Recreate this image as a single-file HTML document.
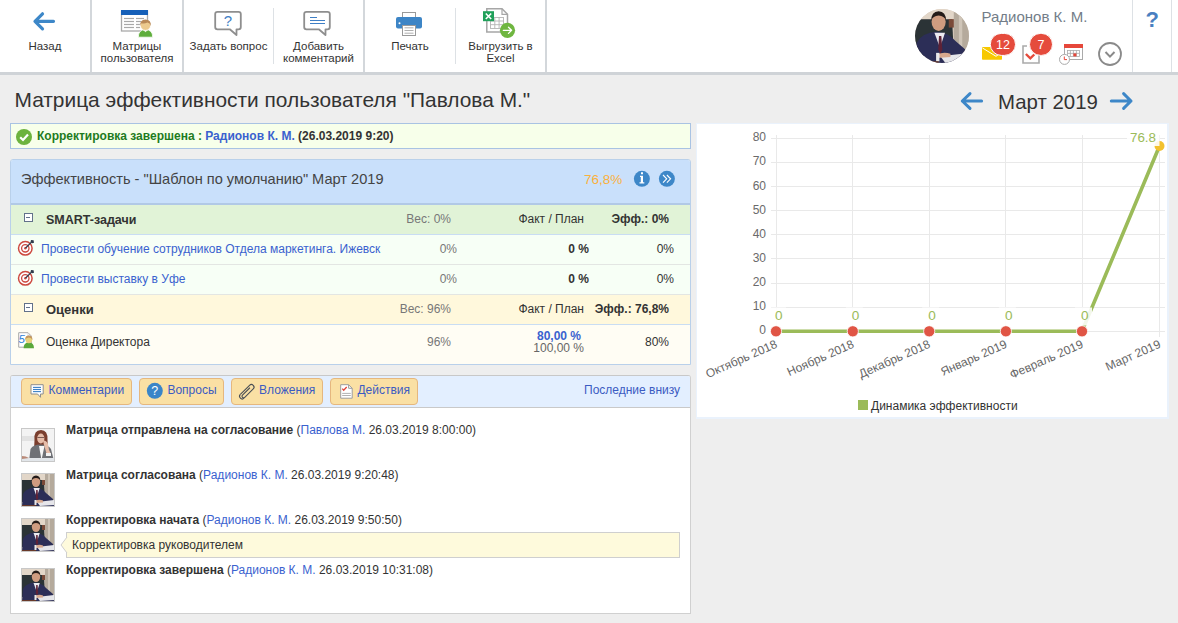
<!DOCTYPE html>
<html><head><meta charset="utf-8">
<style>
*{box-sizing:border-box;margin:0;padding:0}
html,body{width:1178px;height:623px;overflow:hidden;background:#eeeeee;font-family:"Liberation Sans",sans-serif;color:#333}
.a{position:absolute;white-space:nowrap}
#tb{position:absolute;left:0;top:0;width:1178px;height:72px;background:#fff;border-bottom:0}
#tbb{position:absolute;left:0;top:72px;width:1178px;height:3px;background:#cfd3d7}
.vs{position:absolute;top:0;width:2px;height:72px;background:#d3d7db}
.vt{position:absolute;top:8px;width:1px;height:56px;background:#dde1e5}
.tl{position:absolute;font-size:11.5px;line-height:12px;color:#333;text-align:center;white-space:nowrap}
.pan{position:absolute;background:#fff}
.row{position:absolute;left:0;width:679px;border-top:1px solid #c7dbf1}
.lnk{color:#3a62cf}
.mb{width:9px;height:9px;border:1.3px solid #62718a;background:#fff}
.mb:after{content:"";position:absolute;left:0.9px;top:2.8px;width:4.6px;height:1.3px;background:#62718a}
.av{width:34px;height:34px;border:1px solid #c9c9c9;background:#555}
.ct{font-size:12px;line-height:1;color:#333}
.lk{color:#3a62cf}
.btn{position:absolute;top:378px;height:27px;background:#fae0a4;border:1px solid #e5b77f;border-radius:4px;font-size:12px;color:#3b5bc2}
</style></head><body>
<div id="tb"></div><div id="tbb"></div>
<div class="vs" style="left:90px"></div>
<div class="vs" style="left:182px"></div>
<div class="vt" style="left:273px"></div>
<div class="vs" style="left:363px"></div>
<div class="vt" style="left:455px"></div>
<div class="vs" style="left:545px"></div>
<div class="vt" style="left:1132px;top:0;height:72px"></div>
<div class="vt" style="left:1171px;top:0;height:72px"></div>

<svg class="a" style="left:0;top:0" width="1178" height="72">
 <defs>
  <symbol id="man" viewBox="0 0 32 32">
   <rect width="32" height="32" fill="#d9cbbd"/>
   <rect x="0" y="0" width="32" height="6" fill="#e2d6c8"/>
   <rect x="23" y="0" width="9" height="26" fill="#b5aa9c"/>
   <rect x="26" y="0" width="2" height="26" fill="#cfc5b8"/>
   <path d="M0 6 L22 6 L23 27 L0 28 Z" fill="#2b3336"/>
   <rect x="20" y="6" width="3" height="5" fill="#7a4a38"/>
   <path d="M0 32 L1 20 Q4 14 13 13.5 Q20 14 24 19 L31 25 L32 32 Z" fill="#2c2e57"/>
   <path d="M11.5 14 L14.8 23 L17.8 14 Z" fill="#eceaf0"/>
   <path d="M14.2 16 L15.6 16 L16.2 24 L15 27 L13.8 24 Z" fill="#5e2236"/>
   <ellipse cx="14" cy="7.6" rx="4.2" ry="5.4" fill="#cf9c80"/>
   <path d="M9.6 7 Q9.6 1.6 14 1.4 Q18.4 1.6 18.4 7 Q17.4 4 14 3.9 Q10.6 4 9.6 7 Z" fill="#241b18"/>
   <path d="M15 28 L32 26 L32 31 L18 32 Z" fill="#e6e6ea"/>
   <path d="M13 27 Q17 25 21 26.5 L21 28.5 L13 29 Z" fill="#d7a88d"/>
   <rect x="12.5" y="26" width="2" height="5" fill="#e8e8ea"/>
   <rect x="0" y="31" width="14" height="1" fill="#6a3a2a"/>
  </symbol>
  <symbol id="woman" viewBox="0 0 32 32">
   <rect width="32" height="32" fill="#f3f3f3"/>
   <rect x="0" y="7" width="13" height="5" fill="#e2e2e2"/>
   <path d="M12.5 11 Q11.5 1 19 1 Q26 1 25.5 11 L26 22 L12 22 Z" fill="#7a3e2e"/>
   <ellipse cx="18.8" cy="9.5" rx="3.6" ry="5" fill="#e6bda9"/>
   <path d="M15.5 8.5 H22" stroke="#4a3030" stroke-width="0.7"/>
   <path d="M7 32 L8.5 20 Q11 15.5 18.5 15.5 Q26 15.5 29 20 L32 32 Z" fill="#6f7176"/>
   <path d="M17 17 L19.5 31 L22.5 17 Z" fill="#f6f6f6"/>
   <path d="M21 11.5 Q24.5 11 26 15 L27 21 L29 25 L25 26 L22 16 Z" fill="#e6bda9"/>
   <rect x="24" y="24" width="5" height="3" fill="#f2f2f2"/>
   <rect x="0" y="29" width="32" height="3" fill="#e2e6ea"/>
   <path d="M0 27 Q4 27 7 29 L0 30 Z" fill="#b98a78"/>
  </symbol>
  <clipPath id="cc"><circle cx="942" cy="36" r="27"/></clipPath>
 </defs>
 <!-- back arrow -->
 <path d="M35 21.3 H53.5 M42.5 13.8 L35 21.3 L42.5 28.8" fill="none" stroke="#3d87c8" stroke-width="3.2" stroke-linecap="round" stroke-linejoin="round"/>
 <!-- matrices icon -->
 <rect x="121.5" y="11" width="26" height="20" fill="#fff" stroke="#a9a9a9" stroke-width="1.3"/>
 <rect x="121" y="10" width="27" height="5" fill="#1660b8"/>
 <g stroke="#a9a9a9" stroke-width="1.2">
  <line x1="124" y1="18.5" x2="134" y2="18.5"/><line x1="136" y1="18.5" x2="144" y2="18.5"/>
  <line x1="124" y1="21.5" x2="134" y2="21.5"/><line x1="136" y1="21.5" x2="141" y2="21.5"/>
  <line x1="124" y1="24.5" x2="134" y2="24.5"/><line x1="136" y1="24.5" x2="140" y2="24.5"/>
  <line x1="124" y1="27.5" x2="134" y2="27.5"/><line x1="136" y1="27.5" x2="140" y2="27.5"/>
 </g>
 <path d="M138.3 37.2 Q138.3 29.6 145.5 29.6 Q152.7 29.6 152.7 37.2 Z" fill="#5fae3c" stroke="#fff" stroke-width="0.8"/>
 <path d="M143 29.8 L145.5 32.3 L148 29.8 Z" fill="#e8f0e0"/>
 <circle cx="145.5" cy="25.2" r="5.2" fill="#ecca8e" stroke="#fff" stroke-width="0.8"/>
 <path d="M140.2 26 Q139.6 19.8 145.5 19.6 Q151.4 19.8 150.8 26 Q150 23 147.5 22.6 Q144 24 141.5 23.2 Q140.6 24.5 140.2 26 Z" fill="#b98a58"/>
 <!-- question bubble -->
 <path d="M217.5 11.8 H238.5 Q240.8 11.8 240.8 14 V27 Q240.8 29.3 238.5 29.3 H236.5 V35 L229.8 29.3 H217.5 Q215.2 29.3 215.2 27 V14 Q215.2 11.8 217.5 11.8 Z" fill="#fff" stroke="#8e8e8e" stroke-width="1.8" stroke-linejoin="round"/>
 <text x="228" y="26" font-size="15" fill="#3f7fc5" text-anchor="middle" font-family="Liberation Sans">?</text>
 <!-- comment bubble -->
 <path d="M306.5 11.8 H327.5 Q329.8 11.8 329.8 14 V27 Q329.8 29.3 327.5 29.3 H325.5 V35 L318.8 29.3 H306.5 Q304.2 29.3 304.2 27 V14 Q304.2 11.8 306.5 11.8 Z" fill="#fff" stroke="#8e8e8e" stroke-width="1.8" stroke-linejoin="round"/>
 <g stroke="#3f7fc5" stroke-width="1">
  <line x1="310" y1="17.5" x2="317" y2="17.5"/>
  <line x1="310" y1="20.5" x2="325" y2="20.5"/>
  <line x1="310" y1="23.5" x2="325" y2="23.5"/>
 </g>
 <!-- printer -->
 <rect x="402.5" y="12.5" width="13" height="6" fill="#fff" stroke="#9a9a9a" stroke-width="1"/>
 <rect x="396" y="17" width="26" height="11.5" rx="2" fill="#3d85c6"/>
 <circle cx="399.5" cy="23.3" r="1" fill="#fff"/>
 <rect x="402.5" y="25.5" width="13" height="10" fill="#fff" stroke="#9a9a9a" stroke-width="1"/>
 <g stroke="#9a9a9a" stroke-width="0.8">
  <line x1="404.5" y1="27.8" x2="413.5" y2="27.8"/>
  <line x1="404.5" y1="30.5" x2="413.5" y2="30.5"/>
  <line x1="404.5" y1="33.2" x2="413.5" y2="33.2"/>
 </g>
 <!-- excel -->
 <path d="M486.8 8.8 H502 L507.5 14.3 V32 H486.8 Z" fill="#fff" stroke="#a6a6a6" stroke-width="1.5"/>
 <path d="M502 8.8 V14.3 H507.5" fill="none" stroke="#a6a6a6" stroke-width="1.2"/>
 <g stroke="#b4b4b4" stroke-width="0.9" fill="none">
  <rect x="490.5" y="17.5" width="13" height="11"/>
  <line x1="490.5" y1="21" x2="503.5" y2="21"/><line x1="490.5" y1="24.7" x2="503.5" y2="24.7"/>
  <line x1="494.8" y1="17.5" x2="494.8" y2="28.5"/><line x1="499.1" y1="17.5" x2="499.1" y2="28.5"/>
 </g>
 <rect x="483" y="11.2" width="11" height="10" fill="#20a05a"/>
 <path d="M485.8 13.5 L491.2 19 M491.2 13.5 L485.8 19" stroke="#fff" stroke-width="1.6"/>
 <circle cx="507.5" cy="30.3" r="7.6" fill="#6fb640"/>
 <path d="M503.3 30.3 H511.5 M508.5 27.2 L511.6 30.3 L508.5 33.4" fill="none" stroke="#fff" stroke-width="1.3" stroke-linecap="round" stroke-linejoin="round"/>

 <!-- big avatar -->
 <g clip-path="url(#cc)"><use href="#man" x="915" y="9" width="54" height="54"/></g>
 <!-- envelope -->
 <rect x="982" y="47" width="20" height="12.8" rx="0.8" fill="#f7c800"/>
 <path d="M982.5 48 L996 56.3 L1002 52" fill="none" stroke="#fff" stroke-width="1"/>
 <rect x="990.3" y="33.4" width="25.2" height="22" rx="11" fill="#e54b3c" stroke="#fff" stroke-width="1"/>
 <text x="1003" y="49.2" font-size="12.5" fill="#fff" text-anchor="middle" font-family="Liberation Sans">12</text>
 <!-- clipboard -->
 <path d="M1027 46 H1023 V63 H1039 V55" fill="none" stroke="#ababab" stroke-width="1.6"/>
 <path d="M1025.9 54 L1030.3 58.3 L1034.3 54.5" fill="none" stroke="#e54b3c" stroke-width="2.4"/>
 <rect x="1029.5" y="33.4" width="23" height="22" rx="11" fill="#e54b3c" stroke="#fff" stroke-width="1"/>
 <text x="1041" y="49.2" font-size="12.5" fill="#fff" text-anchor="middle" font-family="Liberation Sans">7</text>
 <!-- calendar -->
 <rect x="1064.5" y="44.5" width="18" height="15" fill="#fff" stroke="#aaa" stroke-width="1"/>
 <rect x="1064" y="44" width="19" height="4" fill="#e6473a"/>
 <g fill="none" stroke="#aaa" stroke-width="0.8">
  <rect x="1067.4" y="50.4" width="12" height="6"/>
  <line x1="1070.4" y1="50.4" x2="1070.4" y2="56.4"/><line x1="1073.4" y1="50.4" x2="1073.4" y2="56.4"/><line x1="1076.4" y1="50.4" x2="1076.4" y2="56.4"/>
  <line x1="1067.4" y1="53.4" x2="1079.4" y2="53.4"/>
 </g>
 <rect x="1073.4" y="53.4" width="3" height="3" fill="#e6473a"/>
 <circle cx="1064.5" cy="59.4" r="5" fill="#fff" stroke="#aaa" stroke-width="1"/>
 <path d="M1064.3 56.5 V59.6 H1067" fill="none" stroke="#e6473a" stroke-width="1"/>
 <!-- chevron -->
 <circle cx="1110" cy="54" r="11" fill="none" stroke="#8a8a8a" stroke-width="1.8"/>
 <path d="M1105.5 52 L1110 56.6 L1114.5 52" fill="none" stroke="#8a8a8a" stroke-width="2"/>
 <!-- help -->
 <text x="1152.3" y="27" font-size="22" font-weight="bold" fill="#4a7fc1" text-anchor="middle" font-family="Liberation Sans">?</text>
</svg>
<div class="a" style="left:981.5px;top:8.6px;font-size:15px;line-height:1;color:#737d88">Радионов К. М.</div>

<!-- toolbar labels -->
<div class="tl" style="left:0;width:90px;top:40px">Назад</div>
<div class="tl" style="left:92px;width:90px;top:40px">Матрицы<br>пользователя</div>
<div class="tl" style="left:184px;width:89px;top:40px">Задать вопрос</div>
<div class="tl" style="left:274px;width:89px;top:40px">Добавить<br>комментарий</div>
<div class="tl" style="left:365px;width:90px;top:40px">Печать</div>
<div class="tl" style="left:456px;width:89px;top:40px">Выгрузить в<br>Excel</div>

<!-- title -->
<div class="a" style="left:14.5px;top:88px;font-size:20.9px;color:#333">Матрица эффективности пользователя "Павлова М."</div>

<!-- status -->
<div class="pan" style="left:10px;top:123px;width:681px;height:26px;background:#f7ffea;border:1px solid #a9c3e3"></div>

<!-- efficiency panel -->
<div class="pan" style="left:10px;top:159px;width:681px;height:206px;border:1px solid #b9d0ea;border-radius:3px 3px 0 0;background:#fffdf4"></div>
<div class="a" style="left:11px;top:160px;width:679px;height:43px;background:#c9e0fb;border-radius:2px 2px 0 0"></div>
<div class="a" style="left:11px;top:203px;width:679px;height:2px;background:#b1c9e6"></div>
<div class="a" style="left:11px;top:205px;width:679px;height:29px;background:#e1f3d7"></div>
<div class="a" style="left:11px;top:234px;width:679px;height:1px;background:#c9ddf3"></div>
<div class="a" style="left:11px;top:235px;width:679px;height:29px;background:#f7fff6"></div>
<div class="a" style="left:11px;top:264px;width:679px;height:1px;background:#e3e6e3"></div>
<div class="a" style="left:11px;top:265px;width:679px;height:29px;background:#f7fff6"></div>
<div class="a" style="left:11px;top:294px;width:679px;height:1px;background:#e3e6e3"></div>
<div class="a" style="left:11px;top:295px;width:679px;height:29px;background:#fff8dc"></div>
<div class="a" style="left:11px;top:324px;width:679px;height:1px;background:#c9ddf3"></div>
<div class="a" style="left:11px;top:325px;width:679px;height:39px;background:#fffdf4"></div>

<div class="a" style="left:21px;top:171.6px;font-size:14.6px;line-height:1;color:#444">Эффективность - "Шаблон по умолчанию" Март 2019</div>
<div class="a" style="left:584px;top:172.6px;font-size:13.5px;line-height:1;color:#fbb03b">76,8%</div>

<div class="a mb" style="left:24px;top:213px"></div>
<div class="a" style="left:46px;top:213.6px;font-size:12.5px;line-height:1;font-weight:bold;color:#333">SMART-задачи</div>
<div class="a" style="right:727px;top:212.6px;font-size:12px;line-height:1;color:#777">Вес: 0%</div>
<div class="a" style="right:594px;top:212.6px;font-size:12px;line-height:1;color:#333">Факт / План</div>
<div class="a" style="right:509px;top:212.6px;font-size:12px;line-height:1;color:#333;font-weight:bold">Эфф.: 0%</div>

<div class="a" style="left:41px;top:243px;font-size:12px;line-height:1;color:#3a62cf">Провести обучение сотрудников Отдела маркетинга. Ижевск</div>
<div class="a" style="right:721px;top:243px;font-size:12px;line-height:1;color:#777">0%</div>
<div class="a" style="right:589px;top:243px;font-size:12px;line-height:1;color:#333;font-weight:bold">0 %</div>
<div class="a" style="right:504px;top:243px;font-size:12px;line-height:1;color:#333">0%</div>

<div class="a" style="left:41px;top:273px;font-size:12px;line-height:1;color:#3a62cf">Провести выставку в Уфе</div>
<div class="a" style="right:721px;top:273px;font-size:12px;line-height:1;color:#777">0%</div>
<div class="a" style="right:589px;top:273px;font-size:12px;line-height:1;color:#333;font-weight:bold">0 %</div>
<div class="a" style="right:504px;top:273px;font-size:12px;line-height:1;color:#333">0%</div>

<div class="a mb" style="left:24px;top:303px"></div>
<div class="a" style="left:46px;top:302.6px;font-size:13px;line-height:1;font-weight:bold;color:#333">Оценки</div>
<div class="a" style="right:727px;top:303px;font-size:12px;line-height:1;color:#777">Вес: 96%</div>
<div class="a" style="right:594px;top:303px;font-size:12px;line-height:1;color:#333">Факт / План</div>
<div class="a" style="right:509px;top:303px;font-size:12px;line-height:1;color:#333;font-weight:bold">Эфф.: 76,8%</div>

<div class="a" style="left:46px;top:336px;font-size:12px;line-height:1;color:#333">Оценка Директора</div>
<div class="a" style="right:727px;top:336px;font-size:12px;line-height:1;color:#777">96%</div>
<div class="a" style="right:597px;top:329.5px;font-size:12px;line-height:1;color:#3a62cf;font-weight:bold">80,00 %</div>
<div class="a" style="right:594px;top:342px;font-size:12px;line-height:1;color:#666">100,00 %</div>
<div class="a" style="right:509px;top:336px;font-size:12px;line-height:1;color:#333">80%</div>

<!-- status text -->
<div class="a" style="left:37px;top:129.6px;font-size:12px;line-height:1;font-weight:bold;color:#1e7b1e">Корректировка завершена : <span style="color:#3a62cf">Радионов К. М.</span> <span style="color:#333">(26.03.2019 9:20)</span></div>

<svg class="a" style="left:0;top:120px" width="700" height="240">
 <g transform="translate(0,-120)">
 <!-- status check -->
 <circle cx="24" cy="137" r="8" fill="#6cb33e"/>
 <path d="M20.2 137.3 L23 140 L28 134.5" fill="none" stroke="#fff" stroke-width="2.2"/>
 <!-- info / more -->
 <circle cx="641.9" cy="178.8" r="8" fill="#3d87c8"/>
 <path d="M640 175.8 H643 V182.3 H644.3 V183.5 H639.5 V182.3 H640.8 V177 H640 Z M641 172.2 H643 V174.3 H641 Z" fill="#fff"/>
 <circle cx="666.9" cy="178.8" r="8" fill="#3d87c8"/>
 <path d="M663 175 L666.7 178.8 L663 182.6 M666.9 175 L670.6 178.8 L666.9 182.6" fill="none" stroke="#fff" stroke-width="1.1"/>
 <!-- targets -->
 <g id="tgt">
  <circle cx="25.3" cy="248.3" r="6.8" fill="#fff" stroke="#cd4a40" stroke-width="1.5"/>
  <circle cx="25.3" cy="248.3" r="3.7" fill="none" stroke="#cd4a40" stroke-width="1.3"/>
  <circle cx="25.3" cy="248.3" r="1.2" fill="#cd4a40"/>
  <path d="M25.6 248 L32 241.6" stroke="#2f3a4a" stroke-width="1.3"/>
  <path d="M31 240 L33.6 240.2 L34 242.8 L32.2 243.2 L30.6 241.8 Z" fill="#2f3a4a"/>
 </g>
 <use href="#tgt" x="0" y="30"/>
 <!-- minus boxes handled in html -->
 <!-- score icon -->
 <path d="M18.7 332.7 H28 L31.3 336 V347.2 H18.7 Z" fill="#fff" stroke="#a8a8a8" stroke-width="1"/>
 <path d="M28 332.7 V336 H31.3" fill="none" stroke="#d0d0d0" stroke-width="0.8"/>
 <text x="18.6" y="343" font-size="11.5" fill="#2f7fd6" font-style="italic" font-family="Liberation Sans">5</text>
 <path d="M23.6 348.2 Q23.6 342.6 28.8 342.6 Q34 342.6 34 348.2 Z" fill="#5aa83a"/>
 <ellipse cx="28.8" cy="339.6" rx="3.4" ry="3.6" fill="#ead07c"/>
 <path d="M25.2 340 Q25 335.6 28.8 335.6 Q32.6 335.6 32.4 340 Q31.6 337.6 28.8 337.4 Q26 337.6 25.2 340 Z" fill="#c4975f"/>
 </g>
</svg>
<!-- month nav -->
<svg class="a" style="left:958px;top:90px" width="28" height="22"><path d="M4.3 11 H23.6 M12 3.6 L4.3 11 L12 18.4" fill="none" stroke="#3d87c8" stroke-width="3" stroke-linecap="round" stroke-linejoin="round"/></svg>
<div class="a" style="left:998px;top:91.5px;font-size:20.4px;line-height:1;color:#333">Март 2019</div>
<svg class="a" style="left:1107px;top:90px" width="28" height="22"><path d="M4.3 11 H24 M16.6 3.6 L24 11 L16.6 18.4" fill="none" stroke="#3d87c8" stroke-width="3" stroke-linecap="round" stroke-linejoin="round"/></svg>

<!-- comments panel -->
<div class="pan" style="left:10px;top:375px;width:681px;height:239px;border:1px solid #d0d0d0;border-top-color:#c8c8c8;border-radius:3px 3px 0 0;background:#fff"></div>
<div class="a" style="left:11px;top:376px;width:679px;height:32px;background:#e3efff;border-bottom:1px solid #c9c9c9;border-radius:2px 2px 0 0"></div>
<div class="btn" style="left:21px;width:111px"></div>
<div class="btn" style="left:139px;width:85px"></div>
<div class="btn" style="left:231px;width:92px"></div>
<div class="btn" style="left:330px;width:88px"></div>
<div class="a" style="left:48.5px;top:384px;font-size:12px;line-height:1;color:#3b5bc2">Комментарии</div>
<div class="a" style="left:167.4px;top:384px;font-size:12px;line-height:1;color:#3b5bc2">Вопросы</div>
<div class="a" style="left:259px;top:384px;font-size:12px;line-height:1;color:#3b5bc2">Вложения</div>
<div class="a" style="left:357.4px;top:384px;font-size:12px;line-height:1;color:#3b5bc2">Действия</div>
<div class="a" style="left:584px;top:384px;font-size:12px;line-height:1;color:#3b5bc2">Последние внизу</div>

<!-- comment entries -->
<svg class="a" style="left:0;top:370px" width="700" height="240">
 <g transform="translate(0,-370)">
 <!-- comment icon -->
 <path d="M31 384.7 H43.2 V394 H40.5 V397.3 L37.6 394 H31 Z" fill="#fff" stroke="#8e8e8e" stroke-width="1"/>
 <g stroke="#3a80c6" stroke-width="1.1"><line x1="33" y1="387.4" x2="41" y2="387.4"/><line x1="33" y1="389.5" x2="41" y2="389.5"/><line x1="33" y1="391.6" x2="41" y2="391.6"/></g>
 <!-- ? circle -->
 <circle cx="154.8" cy="390.8" r="8" fill="#3a85c8"/>
 <text x="154.8" y="395.3" font-size="12.5" fill="#fff" text-anchor="middle" font-family="Liberation Sans">?</text>
 <!-- paperclip -->
 <g transform="translate(247.5,391) rotate(-45)">
  <path d="M-7.5 -2.6 H5.5 A2.6 2.6 0 0 1 5.5 2.6 H-6.5 A1.6 1.6 0 0 1 -6.5 -0.6 H4" fill="none" stroke="#4a4f55" stroke-width="1.1"/>
  <path d="M-7.5 -2.6 A2.6 2.6 0 0 0 -7.5 2.6" fill="none" stroke="#4a4f55" stroke-width="1.1"/>
 </g>
 <!-- doc icon -->
 <path d="M340.7 384.7 H348.6 L352.2 388.3 V398.2 H340.7 Z" fill="#fff" stroke="#9c9c9c" stroke-width="1"/>
 <path d="M348.6 384.7 V388.3 H352.2" fill="none" stroke="#9c9c9c" stroke-width="1"/>
 <path d="M342.3 388.6 L343.7 390.2 L346.7 387" fill="none" stroke="#e0443a" stroke-width="1.3"/>
 <g stroke="#a9a9a9" stroke-width="0.9"><line x1="342.2" y1="393.4" x2="350.8" y2="393.4"/><line x1="342.2" y1="395.5" x2="350.8" y2="395.5"/></g>
 <!-- avatars -->
 <rect x="21.5" y="428.5" width="33" height="33" fill="#fff" stroke="#c8c8c8"/>
 <use href="#woman" x="22" y="429" width="32" height="32"/>
 <rect x="21.5" y="473.5" width="33" height="33" fill="#fff" stroke="#c8c8c8"/>
 <use href="#man" x="22" y="474" width="32" height="32"/>
 <rect x="21.5" y="518.5" width="33" height="33" fill="#fff" stroke="#c8c8c8"/>
 <use href="#man" x="22" y="519" width="32" height="32"/>
 <rect x="21.5" y="568.5" width="33" height="33" fill="#fff" stroke="#c8c8c8"/>
 <use href="#man" x="22" y="569" width="32" height="32"/>
 </g>
</svg>
<div class="a ct" style="left:66px;top:423.6px"><b>Матрица отправлена на согласование</b> (<span class="lk">Павлова М.</span> 26.03.2019 8:00:00)</div>
<div class="a ct" style="left:66px;top:468.6px"><b>Матрица согласована</b> (<span class="lk">Радионов К. М.</span> 26.03.2019 9:20:48)</div>
<div class="a ct" style="left:66px;top:513.8px"><b>Корректировка начата</b> (<span class="lk">Радионов К. М.</span> 26.03.2019 9:50:50)</div>
<div class="a" style="left:66px;top:532px;width:614px;height:26px;background:#fefadc;border:1px solid #cfcfcf"></div>
<svg class="a" style="left:60px;top:536px" width="8" height="18"><path d="M7 1 L1 9 L7 17" fill="#fefadc" stroke="#cfcfcf" stroke-width="1"/></svg>
<div class="a ct" style="left:72px;top:538.8px">Корректировка руководителем</div>
<div class="a ct" style="left:66px;top:564.1px"><b>Корректировка завершена</b> (<span class="lk">Радионов К. М.</span> 26.03.2019 10:31:08)</div>

<!-- chart panel -->
<div class="pan" style="left:696px;top:123px;width:473px;height:296px;border:1px solid #eaf2fc;border-width:1px 2px 2px 1px"></div>
<svg class="a" style="left:0;top:0" width="1178" height="623" font-family="Liberation Sans">
 <g stroke="#e9e9e9" stroke-width="1">
  <line x1="771" y1="331.5" x2="1165" y2="331.5"/>
  <line x1="771" y1="307.5" x2="1165" y2="307.5"/>
  <line x1="771" y1="283.5" x2="1165" y2="283.5"/>
  <line x1="771" y1="258.5" x2="1165" y2="258.5"/>
  <line x1="771" y1="234.5" x2="1165" y2="234.5"/>
  <line x1="771" y1="210.5" x2="1165" y2="210.5"/>
  <line x1="771" y1="186.5" x2="1165" y2="186.5"/>
  <line x1="771" y1="162.5" x2="1165" y2="162.5"/>
  <line x1="771" y1="138.5" x2="1165" y2="138.5"/>
  <line x1="776.5" y1="135" x2="776.5" y2="337"/>
  <line x1="852.5" y1="135" x2="852.5" y2="337"/>
  <line x1="929.5" y1="135" x2="929.5" y2="337"/>
  <line x1="1005.5" y1="135" x2="1005.5" y2="337"/>
  <line x1="1082.5" y1="135" x2="1082.5" y2="337"/>
  <line x1="1159.5" y1="135" x2="1159.5" y2="337"/>
 </g>
 <g fill="#6a6a6a" font-size="12" text-anchor="end">
  <text x="766" y="141.3">80</text>
  <text x="766" y="165.4">70</text>
  <text x="766" y="189.6">60</text>
  <text x="766" y="213.7">50</text>
  <text x="766" y="237.8">40</text>
  <text x="766" y="261.9">30</text>
  <text x="766" y="286.1">20</text>
  <text x="766" y="310.2">10</text>
  <text x="766" y="334.3">0</text>
 </g>
 <polyline points="776,331.3 852.8,331.3 929.2,331.3 1005.9,331.3 1082,331.3 1159.5,146" fill="none" stroke="#9bbb59" stroke-width="3.6" stroke-linejoin="round"/>
 <g fill="#e05545" stroke="#fff" stroke-width="0.8">
  <circle cx="776" cy="331.3" r="5.6"/>
  <circle cx="852.8" cy="331.3" r="5.6"/>
  <circle cx="929.2" cy="331.3" r="5.6"/>
  <circle cx="1005.9" cy="331.3" r="5.6"/>
  <circle cx="1082" cy="331.3" r="5.6"/>
 </g>
 <circle cx="1159.5" cy="146" r="5" fill="#f2c12e"/>
 <g fill="#fff" fill-opacity="0.88">
  <rect x="769" y="307.5" width="17" height="18"/>
  <rect x="845.8" y="307.5" width="17" height="18"/>
  <rect x="922.2" y="307.5" width="17" height="18"/>
  <rect x="998.9" y="307.5" width="17" height="18"/>
  <rect x="1075" y="307.5" width="17" height="18"/>
  <rect x="1127" y="127" width="32.5" height="19"/>
 </g>
 <g fill="#9bbb59" font-size="13.6" text-anchor="middle">
  <text x="778.8" y="319.8">0</text>
  <text x="855.6" y="319.8">0</text>
  <text x="932.0" y="319.8">0</text>
  <text x="1008.7" y="319.8">0</text>
  <text x="1084.8" y="319.8">0</text>
  <text x="1143" y="142.2" font-size="13.4">76.8</text>
 </g>
 <g fill="#666" font-size="12" text-anchor="end">
  <text transform="translate(778.0,347) rotate(-24)">Октябрь 2018</text>
  <text transform="translate(854.8,347) rotate(-24)">Ноябрь 2018</text>
  <text transform="translate(931.2,347) rotate(-24)">Декабрь 2018</text>
  <text transform="translate(1007.9,347) rotate(-24)">Январь 2019</text>
  <text transform="translate(1084.0,347) rotate(-24)">Февраль 2019</text>
  <text transform="translate(1161.5,347) rotate(-24)">Март 2019</text>
 </g>
 <rect x="858" y="400" width="10" height="10" fill="#9bbb59"/>
 <text x="871" y="410" font-size="12" fill="#333">Динамика эффективности</text>
</svg>
</body></html>
